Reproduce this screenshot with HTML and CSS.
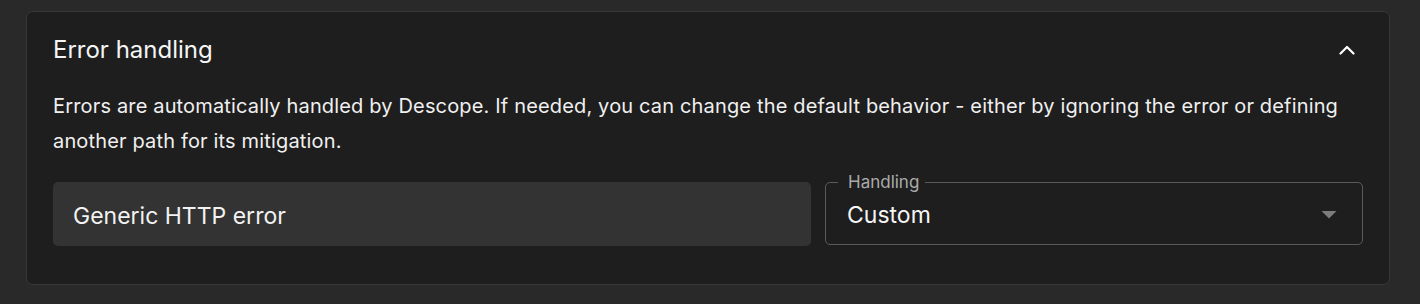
FILE: index.html
```html
<!DOCTYPE html>
<html lang="en">
<head>
<meta charset="utf-8">
<title>Error handling</title>
<link rel="stylesheet" href="styles.css">
</head>
<body>
<section class="card">
  <header class="card-head">
    <h2 class="card-title">Error handling</h2>
    <svg class="chevron" width="16" height="10" viewBox="0 0 16 10" aria-hidden="true"><path d="M1.5 8.5 L8 2 L14.5 8.5" fill="none" stroke="#ffffff" stroke-width="2.2" stroke-linecap="round" stroke-linejoin="round"/></svg>
  </header>
  <p class="card-desc">Errors are automatically handled by Descope. If needed, you can change the default behavior - either by ignoring the error or defining another path for its mitigation.</p>
  <div class="row">
    <div class="field-filled"><span class="field-text">Generic HTTP error</span></div>
    <fieldset class="field-outlined">
      <legend class="field-legend">Handling</legend>
      <span class="field-value">Custom</span>
      <svg class="caret" width="16" height="8" viewBox="0 0 16 8" aria-hidden="true"><path d="M0.5 0 H15.5 L8 7.5 Z" fill="#7c7c7c"/></svg>
    </fieldset>
  </div>
</section>
</body>
</html>
```
FILE: styles.css
```css
* { box-sizing: border-box; }
html, body { margin: 0; padding: 0; }
body {
  background: #292929;
  font-family: Inter, "Liberation Sans", sans-serif;
  color: #f2f2f2;
  padding: 11px 30px 0 26px;
  width: 1420px;
  height: 304px;
}
.card {
  width: 1364px;
  height: 274px;
  background: #1e1e1e;
  border: 1px solid #383838;
  border-radius: 7px;
  padding: 23px 26px 0;
}
.card-head {
  display: flex;
  align-items: center;
  justify-content: space-between;
  height: 30px;
}
.card-title {
  margin: 0;
  font-size: 24px;
  line-height: 30px;
  font-weight: 400;
  color: #f5f5f5;
}
.chevron { margin-right: 8px; }
.card-desc {
  margin: 24px 0 0;
  font-size: 20px;
  line-height: 35px;
  letter-spacing: 0.16px;
  color: #f0f0f0;
}
.row {
  display: grid;
  grid-template-columns: 758px 1fr;
  gap: 14px;
  margin-top: 23px;
}
.field-filled {
  height: 64px;
  background: #333333;
  border-radius: 5px;
  display: flex;
  align-items: center;
  padding: 3px 20px 0;
}
.field-text {
  font-size: 23px;
  color: #f2f2f2;
}
.field-outlined {
  margin: -10px 0 0 0;
  height: 73px;
  border: 1px solid #5a5a5a;
  border-radius: 5px;
  padding: 0 25px 0 12px;
  display: flex;
  align-items: center;
  justify-content: space-between;
  min-width: 0;
}
.field-legend {
  font-size: 17px;
  line-height: 20px;
  color: #ababab;
  padding: 0 6px 0 10px;
}
.field-value {
  font-size: 23px;
  color: #f5f5f5;
  margin: -6px 0 0 9px;
}
.caret { margin-top: -6px; }
```
